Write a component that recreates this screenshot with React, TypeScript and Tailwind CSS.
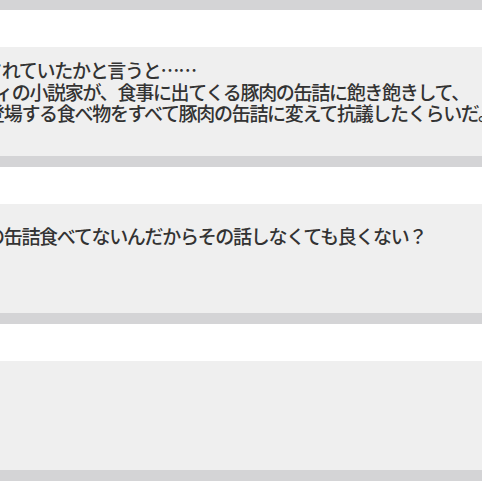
const font = {
  fontFamily: '"Noto Sans CJK JP", "Noto Sans", sans-serif',
};

function Panel({
  lines,
  padTop,
}: {
  lines: { text: string; shift: string }[];
  padTop: string;
}) {
  return (
    <div className="border-b-[11px] border-[#d4d4d6] bg-[#efefef]">
      <div className={`h-[109px] overflow-hidden ${padTop}`}>
        {lines.map((line) => (
          <p
            key={line.text}
            className={`whitespace-nowrap text-[19px] font-medium leading-[21.5px] tracking-[-1.3px] text-[#333333] ${line.shift}`}
          >
            {line.text}
          </p>
        ))}
      </div>
    </div>
  );
}

export default function App() {
  return (
    <div className="h-[482px] w-[482px] overflow-hidden bg-white" style={font}>
      <div className="h-[10px] bg-[#d4d4d6]" />
      <div className="flex flex-col gap-[37px] pt-[37px]">
        <Panel
          padTop="pt-[12px]"
          lines={[
            { text: "されていたかと言うと……", shift: "-ml-[16px]" },
            {
              text: "ィの小説家が、食事に出てくる豚肉の缶詰に飽き飽きして、",
              shift: "-ml-[6px]",
            },
            {
              text: "登場する食べ物をすべて豚肉の缶詰に変えて抗議したくらいだ。",
              shift: "-ml-[14px]",
            },
          ]}
        />
        <Panel
          padTop="pt-[21px]"
          lines={[
            {
              text: "の缶詰食べてないんだからその話しなくても良くない？",
              shift: "-ml-[14px]",
            },
          ]}
        />
        <Panel padTop="pt-[21px]" lines={[]} />
      </div>
    </div>
  );
}
